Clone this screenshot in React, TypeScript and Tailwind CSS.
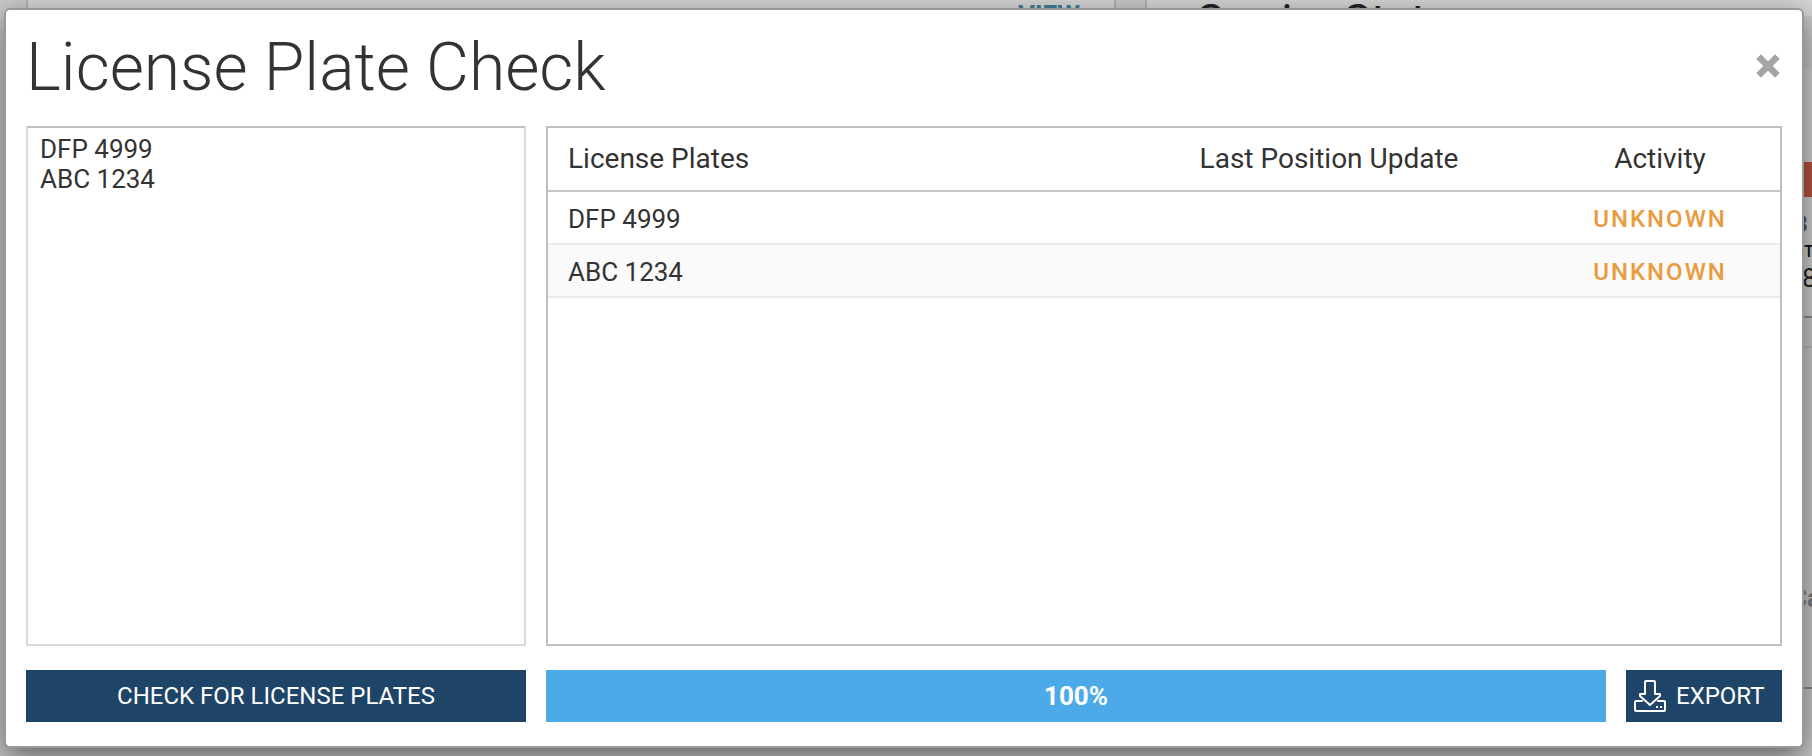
import React, { useState } from 'react';

interface PlateRow {
  plate: string;
  lastUpdate?: string;
  activity: string;
}

const rows: PlateRow[] = [
  { plate: 'DFP 4999', activity: 'UNKNOWN' },
  { plate: 'ABC 1234', activity: 'UNKNOWN' },
];

const CloseIcon = () => (
  <svg viewBox="0 0 24 24" className="size-6" fill="none" stroke="currentColor" strokeWidth="6.5" strokeLinejoin="round">
    <path d="M2.6 2.6l18.8 18.8M21.4 2.6l-18.8 18.8" />
  </svg>
);

const ExportIcon = () => (
  <svg
    viewBox="0 0 32 32"
    className="size-8 shrink-0"
    fill="none"
    stroke="currentColor"
    strokeWidth="2"
    strokeLinejoin="round"
    strokeLinecap="round"
  >
    <path d="M11 2q0-1 1-1h8q1 0 1 1v12h5v2l-10 9-10-9v-2h5z" />
    <path d="M8 21H2q-1 0-1 1v8q0 1 1 1h28q1 0 1-1v-8q0-1-1-1h-6" />
    <path d="M22 27h2M26 27h2" strokeLinecap="butt" />
  </svg>
);

// Dashboard that sits dimmed behind the dialog
const Dashboard = () => (
  <div aria-hidden="true" className="absolute inset-0 overflow-hidden bg-[#c8c8c8]">
    <div className="absolute -top-4 left-[26px] flex h-8 w-[1090px] justify-end border-x-2 border-[#b0b0b0] bg-[#d4d4d4] pr-[34px]">
      <span className="mt-4 text-[26px] leading-[30px] font-bold text-[#3b7f93]">VIEW</span>
    </div>
    <div className="absolute -top-4 left-[1145px] h-8 w-[700px] border-l-2 border-[#b0b0b0] bg-[#d4d4d4] pl-12">
      <span className="mt-[10px] block text-[46px] leading-[54px] text-[#222]">Carrier Stats</span>
    </div>
    <div className="absolute top-[68px] right-0 h-[250px] w-4 border-b-2 border-[#8a8a8a] bg-[#cecece]">
      <div className="mt-[94px] h-[35px] bg-[#b5523f]" />
    </div>
    <span className="absolute top-[208px] left-[1794px] text-[24px] leading-8 font-bold text-[#555]">3</span>
    <span className="absolute top-[242px] left-[1804px] text-[16px] leading-5 font-medium text-[#111]">T</span>
    <span className="absolute top-[262px] left-[1802px] text-[26px] leading-8 text-[#222]">8</span>
    <span className="absolute top-[582px] left-[1790px] text-[26px] leading-8 font-bold text-[#777]">Ca</span>
    <div className="absolute top-[346px] right-0 h-[343px] w-4 border-y-2 border-t-[#bababa] border-b-[#8a8a8a]" />
  </div>
);

export default function App() {
  const [plates, setPlates] = useState(rows.map((r) => r.plate).join('\n'));
  const progress = 100;

  return (
    <div className="relative flex h-screen overflow-hidden pt-2 pr-2 pb-2 pl-1 font-['Roboto',sans-serif] text-[#333]">
      <Dashboard />
      <div
        role="dialog"
        aria-labelledby="dialog-title"
        className="relative flex min-w-0 flex-1 flex-col rounded-md border-2 border-[#999] bg-white px-5 pb-6 shadow-[0_10px_30px_rgba(0,0,0,0.5)]"
      >
        <div className="flex h-[116px] shrink-0 items-start justify-between">
          <h1 id="dialog-title" className="pt-5 text-[66px] leading-[76px] font-light">
            License Plate Check
          </h1>
          <button type="button" aria-label="Close" className="mt-11 mr-0.5 text-[#a5a5a5]">
            <CloseIcon />
          </button>
        </div>

        <div className="flex min-h-0 flex-1 gap-5">
          <div className="flex w-[500px] shrink-0 flex-col gap-6">
            <textarea
              aria-label="License plates to check"
              value={plates}
              onChange={(e) => setPlates(e.target.value)}
              className="flex-1 resize-none border-2 border-[#dadada] border-t-[#c0c0c0] px-3 py-[6px] text-[26px] leading-[30px] outline-none"
            />
            <button type="button" className="h-[52px] bg-[#1e4468] text-[24px] text-white">
              CHECK FOR LICENSE PLATES
            </button>
          </div>

          <div className="flex min-w-0 flex-1 flex-col gap-6">
            <div className="flex-1 overflow-auto border-2 border-[#c0c0c0]">
              <table className="w-full table-fixed border-separate border-spacing-0 text-left text-[26px]">
                <thead>
                  <tr className="h-16 text-[28px] *:border-b-2 *:border-[#c8c8c8]">
                    <th className="pl-5 font-normal">License Plates</th>
                    <th className="w-[422px] text-center font-normal">Last Position Update</th>
                    <th className="w-[240px] text-center font-normal">Activity</th>
                  </tr>
                </thead>
                <tbody>
                  {rows.map((row) => (
                    <tr
                      key={row.plate}
                      className="h-[53px] *:border-b-2 *:border-[#ebebeb] *:pt-[3px] even:bg-[#fafafa]"
                    >
                      <td className="pl-5">{row.plate}</td>
                      <td className="text-center">{row.lastUpdate}</td>
                      <td className="text-center text-[24px] font-medium tracking-[2px] text-[#e99b3e]">
                        {row.activity}
                      </td>
                    </tr>
                  ))}
                </tbody>
              </table>
            </div>
            <div className="flex h-[52px] gap-5">
              <div
                role="progressbar"
                aria-label="Check progress"
                aria-valuenow={progress}
                className="flex flex-1 items-stretch"
              >
                <div
                  className="flex items-center justify-center bg-[#4daae9] text-[26px] font-bold text-white"
                  style={{ width: `${progress}%` }}
                >
                  {progress}%
                </div>
              </div>
              <button
                type="button"
                className="flex w-[156px] items-center gap-[10px] bg-[#1e4468] pl-2 text-[24px] text-white"
              >
                <ExportIcon />
                EXPORT
              </button>
            </div>
          </div>
        </div>
      </div>
    </div>
  );
}
